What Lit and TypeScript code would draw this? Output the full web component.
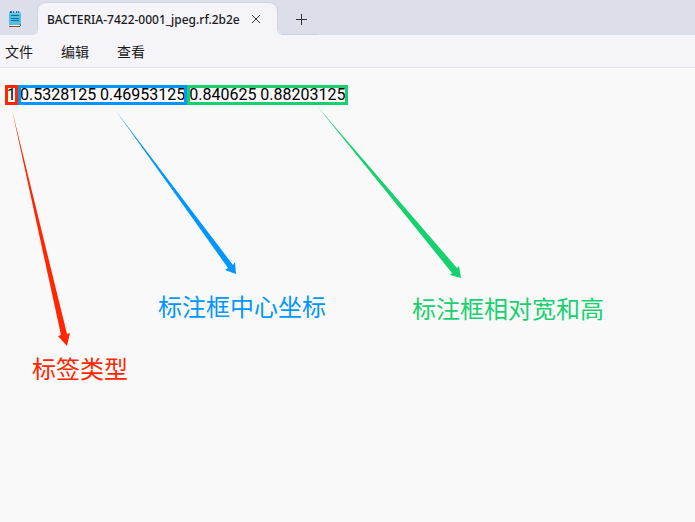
import { LitElement, html, svg, css } from "lit";
import { customElement } from "lit/decorators.js";

const arrows = [
  { kind: "red", points: "12,42 61,267 58,268 67,278 70,265 67,266" },
  { kind: "blue", points: "116,43 228,200 225,202 236,206 235,194 233,197" },
  { kind: "green", points: "317,38 452,205 450,207 461,210 459,198 457,200" },
];

@customElement("app-root")
export class AppRoot extends LitElement {
  static styles = css`
    :host {
      display: flex;
      flex-direction: column;
      min-height: 100vh;
      background: #f9f9f9;
      color: #1a1a1a;
      font-family: "Noto Sans", "Noto Sans CJK SC", sans-serif;
    }
    button {
      border: 0;
      margin: 0;
      padding: 0;
      background: none;
      color: inherit;
      font: inherit;
    }
    svg {
      display: block;
    }
    .titlebar {
      display: flex;
      height: 35px;
      background: #dcdfea;
    }
    .logo {
      width: 14px;
      height: 18px;
      margin: 10px 16px 0 8px;
    }
    .tab {
      position: relative;
      display: flex;
      align-items: center;
      box-sizing: border-box;
      width: 239px;
      height: 32px;
      margin-top: 3px;
      padding: 0 16px 0 9px;
      border-radius: 8px 8px 0 0;
      background: #f4f4f9;
      box-shadow: 0 0 0 1px #d1d4e0;
      clip-path: inset(-1px -4px 0 -4px);
    }
    .tab::before,
    .tab::after {
      content: "";
      position: absolute;
      bottom: 0;
      width: 4px;
      height: 4px;
    }
    .tab::before {
      left: -4px;
      background: radial-gradient(circle at 0 0, #dcdfea 3px, #f4f4f9 4px);
    }
    .tab::after {
      right: -4px;
      background: radial-gradient(circle at 100% 0, #dcdfea 3px, #f4f4f9 4px);
    }
    .title {
      flex: 1;
      padding-top: 2px;
      font-size: 12px;
      line-height: 16px;
      font-weight: 500;
      white-space: nowrap;
    }
    .add {
      display: flex;
      align-items: center;
      justify-content: center;
      width: 38px;
      margin-left: 3px;
      padding: 5px 0 0 4px;
      box-sizing: border-box;
      border-bottom: 1px solid #cdd0dc;
    }
    .menu {
      display: flex;
      gap: 28px;
      height: 32px;
      padding: 0 5px;
      border-bottom: 1px solid #e6e6ea;
      background: #f4f4f9;
      font-size: 14px;
    }
    .menu button {
      font-family: "Noto Sans CJK SC", sans-serif;
    }
    .editor {
      position: relative;
      flex: 1;
    }
    .line {
      margin: 0;
      padding: 19px 7px;
      color: #000;
      font-family: Roboto, sans-serif;
      font-size: 16px;
      line-height: 16px;
    }
    .mark {
      display: inline-block;
      outline: 3px solid;
      outline-offset: -1px;
    }
    .mark span {
      color: #000;
    }
    .red {
      color: #ff2600;
      fill: #ff2600;
    }
    .blue {
      color: #0096ff;
      fill: #0096ff;
    }
    .green {
      color: #17d16f;
      fill: #17d16f;
    }
    .arrows {
      position: absolute;
      left: 0;
      top: 0;
      pointer-events: none;
    }
    .note {
      position: absolute;
      font-family: "Noto Sans CJK SC", sans-serif;
      font-size: 24px;
      line-height: 32px;
      white-space: nowrap;
    }
    .note.red {
      left: 32px;
      top: 284px;
    }
    .note.blue {
      left: 158px;
      top: 222px;
    }
    .note.green {
      left: 412px;
      top: 224px;
    }
  `;

  render() {
    return html`
      <header class="titlebar">
        <svg class="logo" viewBox="0 0 14 18" aria-hidden="true">
          <rect x="1" y="2" width="12" height="13" fill="#52bde6" />
          <rect x="1" y="2" width="12" height="2" fill="#77c9f5" />
          <path d="M2 1h2v2H2zM5 1h1v2H5zM8 1h1v2H8zM10 1h1v2h-1z" fill="#16678c" />
          <path d="M3 5h8v1H3zM3 8h8v1H3zM3 10h8v1H3z" fill="#08718f" />
          <rect x="1" y="15" width="11" height="1" fill="#f5f3ef" />
          <rect x="1" y="16" width="11" height="1" fill="#a4481c" />
          <path d="M12 14h1v2h-1z" fill="#5b8a5e" />
        </svg>
        <div class="tab">
          <span class="title">BACTERIA-7422-0001_jpeg.rf.2b2e</span>
          <button aria-label="关闭">
            <svg width="10" height="10" viewBox="0 0 10 10">
              <path d="M1 1l8 8M9 1l-8 8" stroke="#333" fill="none" />
            </svg>
          </button>
        </div>
        <button class="add" aria-label="新建">
          <svg width="11" height="11" viewBox="0 0 11 11">
            <path d="M5.5 0v11M0 5.5h11" stroke="#333" fill="none" />
          </svg>
        </button>
      </header>
      <nav class="menu">
        <button>文件</button>
        <button>编辑</button>
        <button>查看</button>
      </nav>
      <main class="editor">
        <p class="line">
          <span class="mark red"><span>1</span></span>
          <span class="mark blue"><span>0.5328125 0.46953125</span></span>
          <span class="mark green"><span>0.840625 0.88203125</span></span>
        </p>
        <svg class="arrows" width="480" height="290" viewBox="0 0 480 290" aria-hidden="true">
          ${arrows.map((a) => svg`<polygon class=${a.kind} points=${a.points} />`)}
        </svg>
        <span class="note red">标签类型</span>
        <span class="note blue">标注框中心坐标</span>
        <span class="note green">标注框相对宽和高</span>
      </main>
    `;
  }
}
